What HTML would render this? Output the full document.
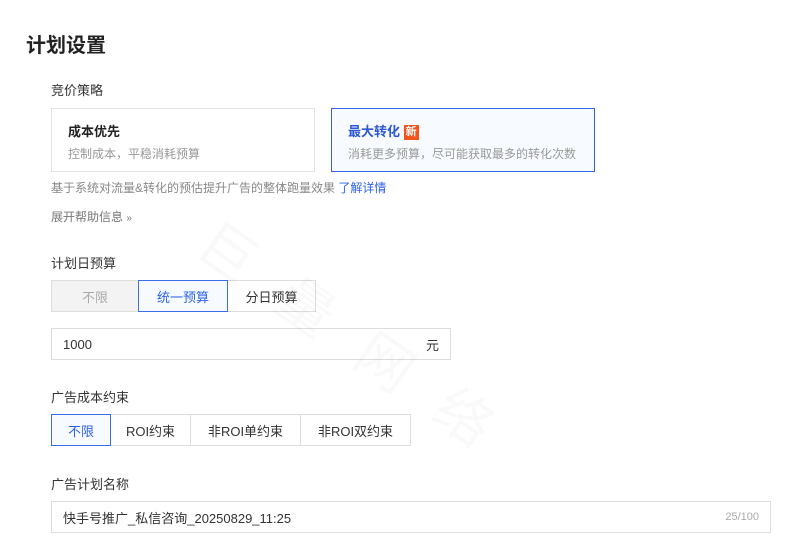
<!DOCTYPE html><html><head><meta charset="utf-8"><style>
*{box-sizing:border-box;margin:0;padding:0}
body{width:796px;height:558px;background:#fff;font-family:"Liberation Sans","Noto Sans CJK SC",sans-serif;color:#333;position:relative;overflow:hidden}
.a{position:absolute}
.lbl{font-size:13px;color:#333;left:51px}
.card{position:absolute;top:108px;width:264px;height:64px;border:1px solid #e3e3e3;background:#fff}
.card .t{position:absolute;left:16px;top:12px;font-size:13px;font-weight:bold;color:#222}
.card .d{position:absolute;left:16px;top:36px;font-size:12px;color:#999}
.seg{position:absolute;display:flex;height:32px}
.seg div{border:1px solid #ddd;margin-left:-1px;display:flex;align-items:center;justify-content:center;font-size:13px;color:#333;background:#fff}
.seg div.on{border-color:#3a6df0;color:#2e62ea;background:#f7faff;position:relative;z-index:1}
.inp{position:absolute;border:1px solid #ddd;height:32px;font-size:13px;color:#333;padding:0 11px;display:flex;align-items:center}
</style></head><body>
<div class="a" style="left:26px;top:29px;font-size:20px;font-weight:bold;color:#222">计划设置</div>
<div class="a lbl" style="top:80px">竞价策略</div>
<div class="card" style="left:51px"><div class="t">成本优先</div><div class="d">控制成本，平稳消耗预算</div></div>
<div class="card" style="left:331px;border-color:#2e62ea;background:#f7fbff"><div class="t" style="color:#2e58d6">最大转化 <span style="display:inline-block;background:#f2541c;color:#fff;font-size:11px;width:15px;height:15px;line-height:15px;text-align:center;vertical-align:1px">新</span></div><div class="d">消耗更多预算，尽可能获取最多的转化次数</div></div>
<div class="a" style="left:51px;top:179px;font-size:12px;color:#888">基于系统对流量&amp;转化的预估提升广告的整体跑量效果 <span style="color:#2e62ea">了解详情</span></div>
<div class="a" style="left:51px;top:208px;font-size:12px;color:#777">展开帮助信息 <span style="font-size:10px">»</span></div>
<div class="a lbl" style="top:253px">计划日预算</div>
<div class="seg" style="left:51px;top:280px"><div style="width:88px;background:#f3f3f3;color:#aaa;margin-left:0">不限</div><div class="on" style="width:90px">统一预算</div><div style="width:89px">分日预算</div></div>
<div class="inp" style="left:51px;top:328px;width:400px;justify-content:space-between"><span>1000</span><span>元</span></div>
<div class="a lbl" style="top:387px">广告成本约束</div>
<div class="seg" style="left:51px;top:414px"><div class="on" style="width:60px;margin-left:0">不限</div><div style="width:81px">ROI约束</div><div style="width:111px">非ROI单约束</div><div style="width:111px">非ROI双约束</div></div>
<div class="a lbl" style="top:474px">广告计划名称</div>
<div class="inp" style="left:51px;top:501px;width:720px;justify-content:space-between"><span>快手号推广_私信咨询_20250829_11:25</span><span style="font-size:11px;color:#aaa">25/100</span></div>
<div class="a" style="left:230px;top:200px;font-size:56px;color:rgba(0,0,0,0.025);transform:rotate(35deg);transform-origin:left top;letter-spacing:40px">巨量网络</div>
</body></html>
